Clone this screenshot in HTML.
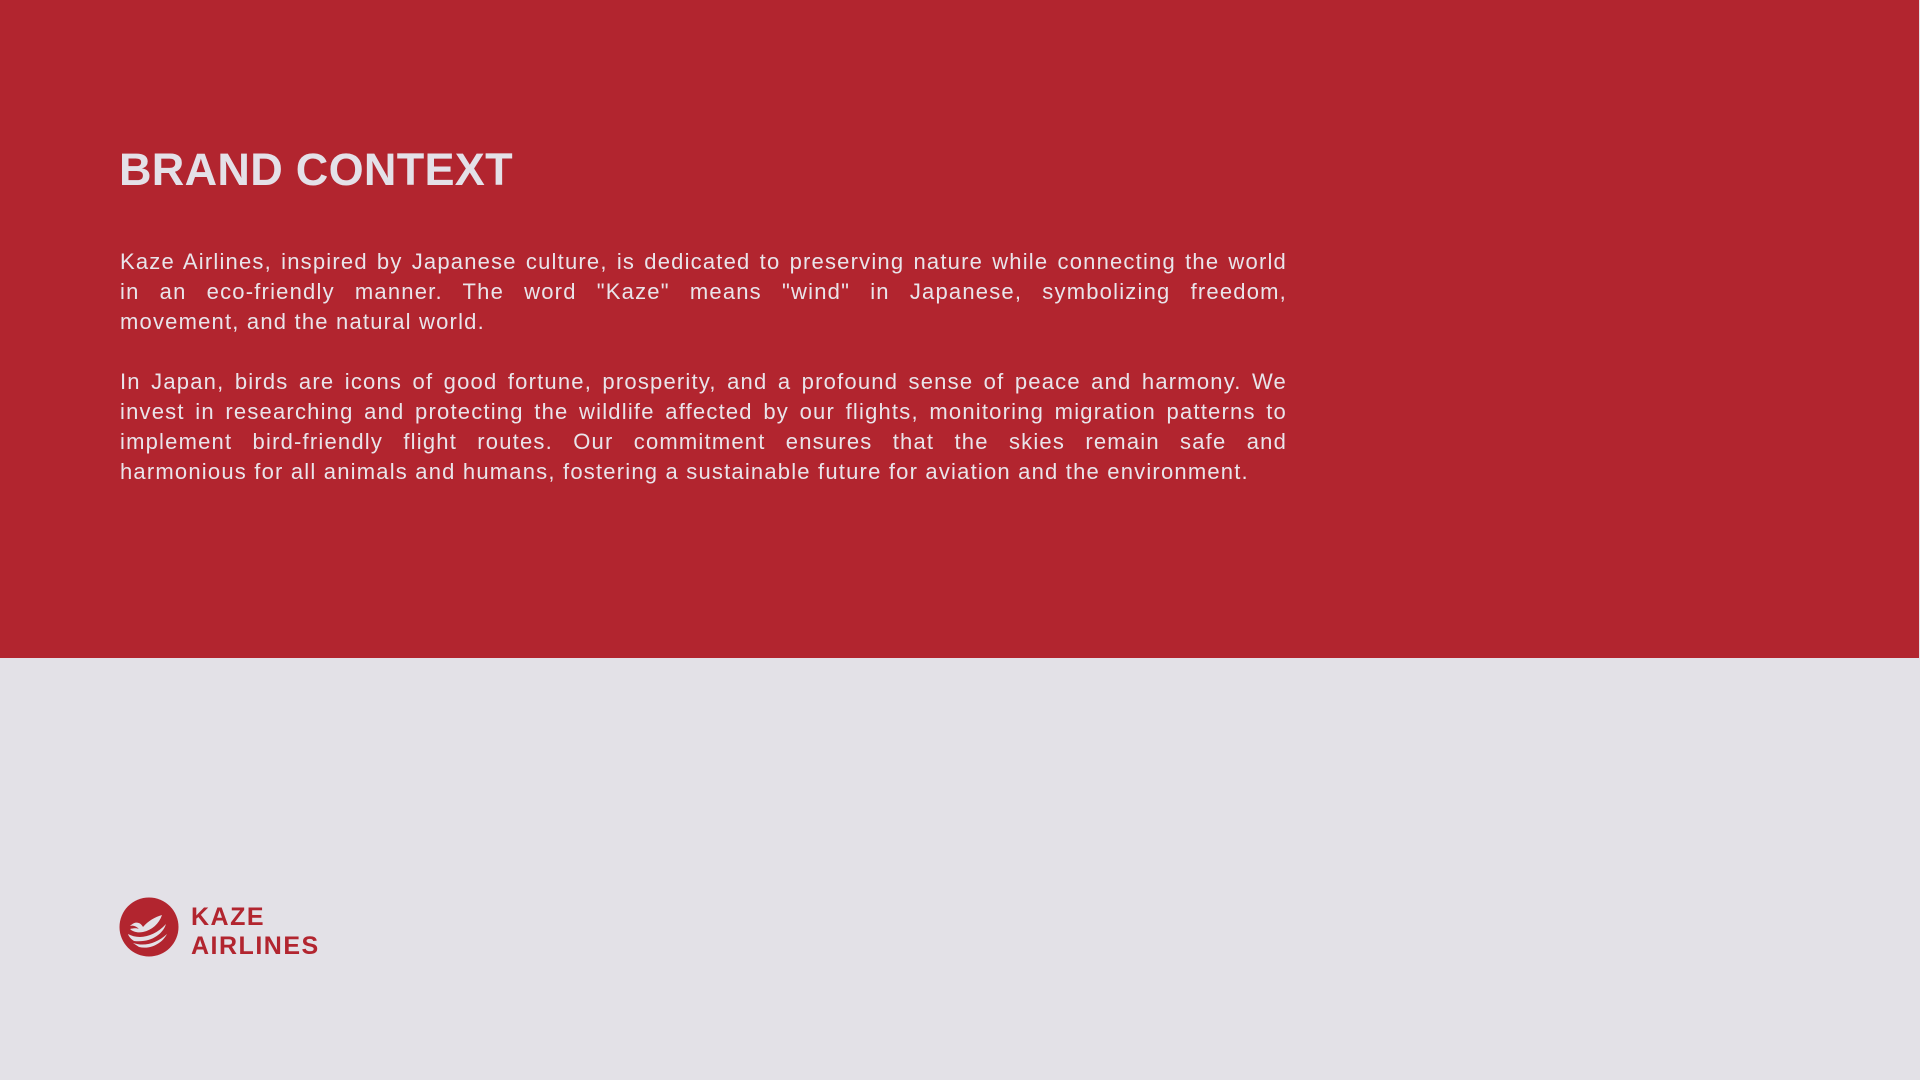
<!DOCTYPE html>
<html><head><meta charset="utf-8"><style>
html,body{margin:0;padding:0;}
body{width:1920px;height:1080px;background:#e3e1e7;position:relative;overflow:hidden;font-family:"Liberation Sans",sans-serif;}
.top{position:absolute;left:0;top:0;width:1919px;height:658px;background:#b2252f;}
h1{position:absolute;left:119px;top:142px;margin:0;font-size:45px;font-weight:bold;color:#e4e1e8;letter-spacing:0.3px;line-height:56px;}
.p{position:absolute;left:120px;width:1167px;color:#e9e4ea;font-size:22px;line-height:30px;letter-spacing:1.2px;}
.p div{text-align:justify;text-align-last:justify;white-space:nowrap;height:30px;}
.p div.l{text-align-last:left;}
.logo{position:absolute;left:119px;top:897px;}
.lt{position:absolute;left:191px;top:903px;color:#b2252f;font-size:25px;line-height:29px;letter-spacing:1.5px;font-weight:bold;}
</style></head><body>
<div class="top"></div>
<h1>BRAND CONTEXT</h1>
<div class="p" style="top:247px">
<div>Kaze Airlines, inspired by Japanese culture, is dedicated to preserving nature while connecting the world</div>
<div>in an eco-friendly manner. The word "Kaze" means "wind" in Japanese, symbolizing freedom,</div>
<div class="l">movement, and the natural world.</div>
</div>
<div class="p" style="top:367px">
<div>In Japan, birds are icons of good fortune, prosperity, and a profound sense of peace and harmony. We</div>
<div>invest in researching and protecting the wildlife affected by our flights, monitoring migration patterns to</div>
<div>implement bird-friendly flight routes. Our commitment ensures that the skies remain safe and</div>
<div class="l">harmonious for all animals and humans, fostering a sustainable future for aviation and the environment.</div>
</div>
<svg class="logo" width="60" height="60" viewBox="0 0 60 60">
<circle cx="30" cy="30" r="29.5" fill="#b2252f"/>
<path d="M11 29 C17 23 22 26 24 30 C29 24 36 20 43 18 C40 27 33 33 24 35 C19 36 14 35 11 32 C15 31 18 31 20 32 C17 29 14 28 11 29Z" fill="#e3e1e7"/>
<path d="M9 37 C20 43 35 40 47 27 C44 37 32 46 15 44 C12 42 10 40 9 37Z" fill="#e3e1e7"/>
<path d="M14 46 C26 50 38 46 48 37 C44 45 33 53 20 50Z" fill="#e3e1e7"/>
</svg>
<div class="lt">KAZE<br>AIRLINES</div>
</body></html>
